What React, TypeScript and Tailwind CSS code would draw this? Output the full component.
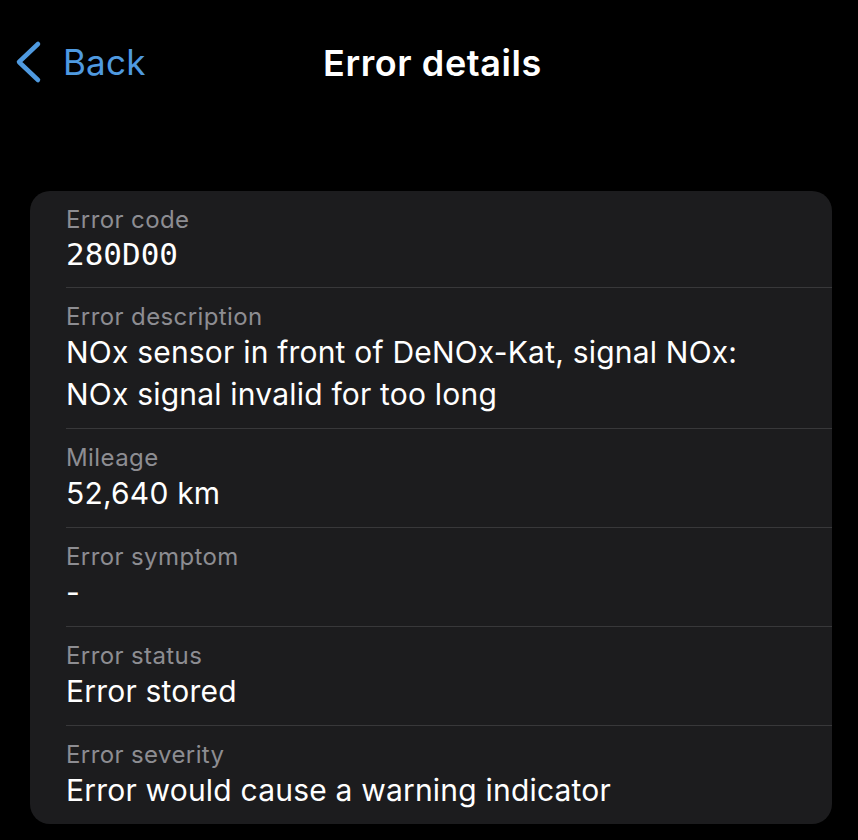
import React from 'react';

interface Row {
  label: string;
  value: string[];
  mono?: boolean;
}

const rows: Row[] = [
  { label: 'Error code', value: ['280D00'], mono: true },
  { label: 'Error description', value: ['NOx sensor in front of DeNOx-Kat, signal NOx:', 'NOx signal invalid for too long'] },
  { label: 'Mileage', value: ['52,640 km'] },
  { label: 'Error symptom', value: ['-'] },
  { label: 'Error status', value: ['Error stored'] },
  { label: 'Error severity', value: ['Error would cause a warning indicator'] },
];

const App: React.FC = () => {
  return (
    <div className="min-h-[840px] w-[858px] bg-black text-white font-['Inter','Liberation_Sans',sans-serif]">
      <header className="relative flex h-[126px] items-center justify-center">
        <button className="absolute left-[13px] top-[40px] flex items-center gap-[20px] text-[#4f9ae0]">
          <svg width="30" height="44" viewBox="0 0 30 44" fill="none">
            <path d="M25 4 L6 22 L25 40" stroke="currentColor" strokeWidth="4.5" strokeLinecap="round" strokeLinejoin="round" />
          </svg>
          <span className="text-[35px] leading-[44px] tracking-[0.2px]">Back</span>
        </button>
        <h1 className="ml-[7px] text-[36px] font-semibold leading-[44px] tracking-[0.6px]">Error details</h1>
      </header>

      <div className="ml-[30px] mr-[26px] mt-[65px] overflow-hidden rounded-[20px] bg-[#1c1c1e]">
        {rows.map((row, i) => (
          <div key={row.label} className="pl-[36px]">
            <div className={`pb-[13px] pt-[15px] ${i < rows.length - 1 ? 'border-b border-[#38383a]' : ''}`}>
              <div className="text-[24px] leading-[28px] tracking-[0.4px] text-[#8d8d92]">{row.label}</div>
              {row.value.map((line) => (
                <div
                  key={line}
                  className={
                    row.mono
                      ? "font-['DejaVu_Sans_Mono',monospace] text-[31px] leading-[40px]"
                      : 'text-[30px] leading-[42px] tracking-[0.2px]'
                  }
                >
                  {line}
                </div>
              ))}
            </div>
          </div>
        ))}
      </div>
    </div>
  );
};

export default App;
